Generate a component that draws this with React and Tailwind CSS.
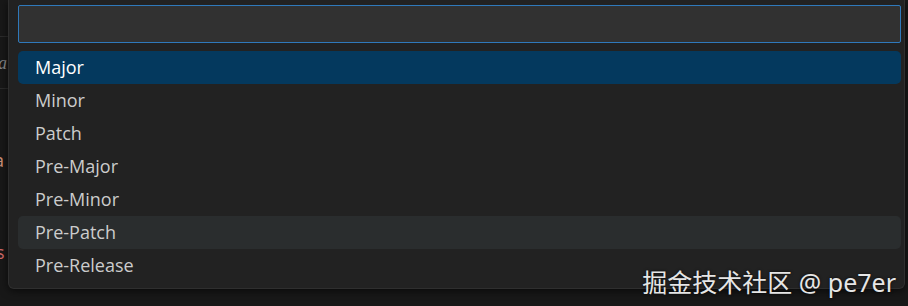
import React from "react";

const options = ["Major", "Minor", "Patch", "Pre-Major", "Pre-Minor", "Pre-Patch", "Pre-Release"];

export default function App() {
  const selected = 0;
  const hovered = 5;

  return (
    <div className="relative w-[908px] h-[306px] bg-[#181818] flex overflow-hidden font-['Open_Sans','Noto_Sans',sans-serif]">
      {/* editor behind the quick pick, only a sliver shows */}
      <div className="w-[8px] shrink-0 flex flex-col overflow-hidden text-[18px] leading-none">
        <div className="h-[37px] border-b border-[#2b2b2b]"></div>
        <div className="h-[52px] border-b border-[#2b2b2b] flex items-center">
          <span className="italic text-[#8a8a8a] font-['Liberation_Serif',serif] -ml-[2px]">a</span>
        </div>
        <div className="h-[80px] flex items-end">
          <span className="text-[#ce9178] -ml-[6px]">-a</span>
        </div>
        <div className="h-[92px] flex items-end">
          <span className="text-[#d16969] -ml-[4px]">s</span>
        </div>
      </div>

      {/* quick pick */}
      <div className="w-[897px] h-[289px] shrink-0 bg-[#222222] border-l border-r border-b border-[#2f2f2f] rounded-b-[6px] shadow-[0_2px_8px_rgba(0,0,0,0.6)] pl-[9px] pr-[3px] pt-[5px] flex flex-col">
        <div className="h-[38px] bg-[#313131] border border-[#2f79bb] rounded-[2px]"></div>
        <div className="mt-[8px] flex flex-col">
          {options.map((o, i) => (
            <div
              key={o}
              className={
                "h-[33px] flex items-center pl-[17px] pb-[1px] rounded-[5px] text-[18px] " +
                (i === selected
                  ? "bg-[#04395e] text-white"
                  : i === hovered
                  ? "bg-[#2a2d2e] text-[#cccccc]"
                  : "text-[#cccccc]")
              }
            >
              {o}
            </div>
          ))}
        </div>
      </div>

      {/* watermark */}
      <div className="absolute right-[12px] bottom-[11px] text-[25px] leading-none text-[#e6e6e6] font-['Noto_Sans','Noto_Sans_CJK_SC',sans-serif] [text-shadow:0_0_3px_rgba(0,0,0,0.8)]">
        掘金技术社区 @ pe7er
      </div>
    </div>
  );
}
